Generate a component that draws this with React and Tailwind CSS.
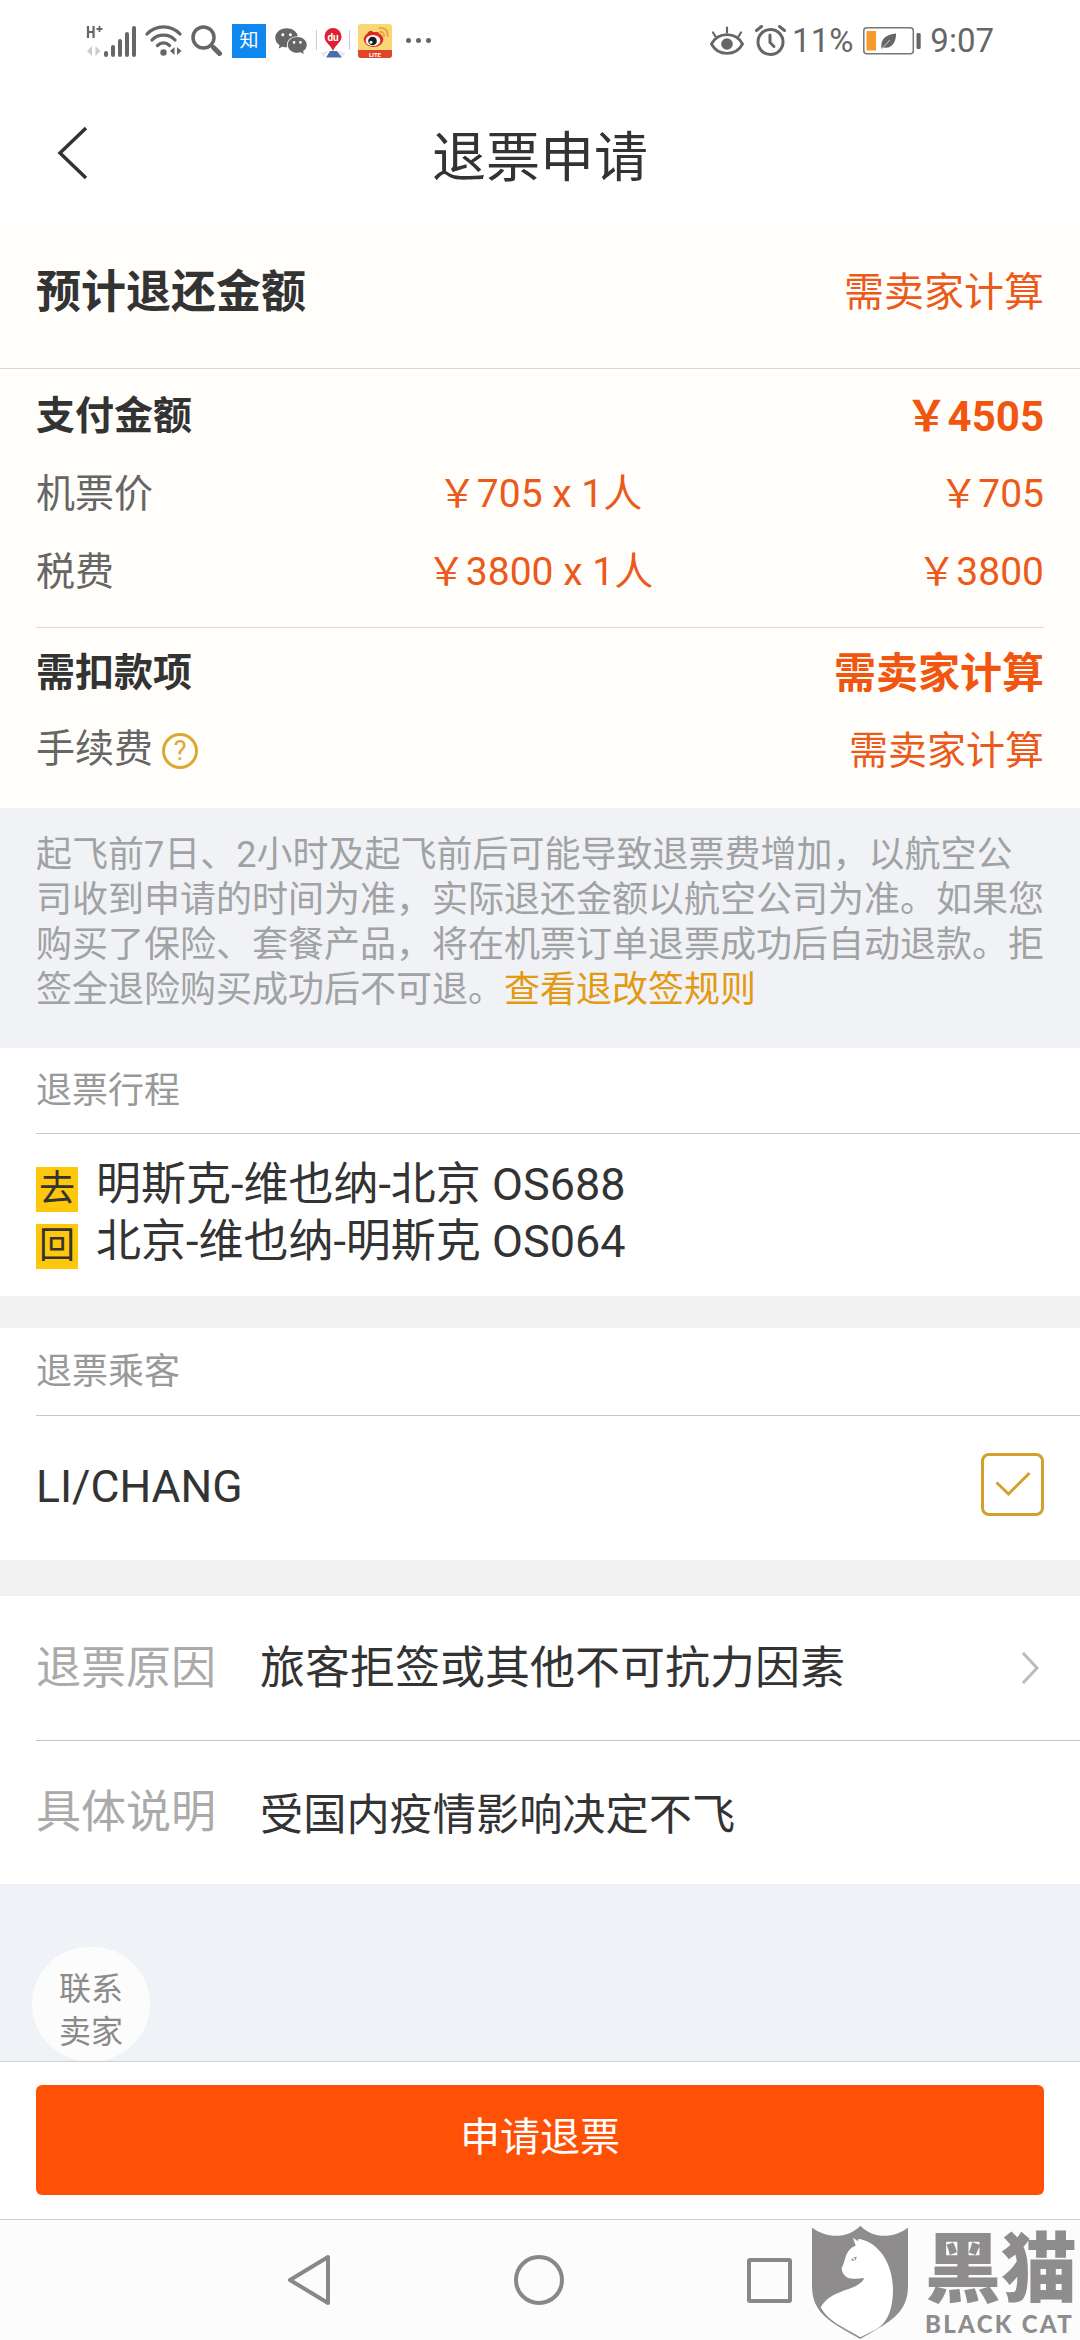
import { useState } from "react";
import { AiFillWechat } from "react-icons/ai";

const RULES_LINES = [
  "起飞前7日、2小时及起飞前后可能导致退票费增加，以航空公",
  "司收到申请的时间为准，实际退还金额以航空公司为准。如果您",
  "购买了保险、套餐产品，将在机票订单退票成功后自动退款。拒",
];

const fees = [
  { label: "机票价", detail: "￥705 x 1人", total: "￥705" },
  { label: "税费", detail: "￥3800 x 1人", total: "￥3800" },
];

const segments = [
  { tag: "去", route: "明斯克-维也纳-北京 OS688" },
  { tag: "回", route: "北京-维也纳-明斯克 OS064" },
];

function SignalIcon() {
  return (
    <svg width="50" height="32" viewBox="0 0 50 32" fill="none" stroke="#666">
      <path d="M2 1v12M7.500 1v12M2 7h5.500" strokeWidth="2.200" />
      <path d="M10.500 4h6M13.500 1v6" strokeWidth="1.800" />
      <path d="M6 21v10l-5-5zM9.500 21v10l5-5z" fill="#ccc" stroke="none" />
      <path d="M20 28v2M27 22v8M34 16v14M41 9v21M48 3v27" strokeWidth="4" strokeLinecap="round" />
    </svg>
  );
}

function WifiIcon() {
  return (
    <svg width="37" height="31" viewBox="0 0 37 31" fill="none" stroke="#666" strokeWidth="3.200" strokeLinecap="round">
      <path d="M2 9C11-.5 26-.5 35 9M7 15c6-6.500 17-6.500 23 0M12.500 20.500c3.500-3.500 8.500-3.500 12 0" />
      <circle cx="18.500" cy="27.500" r="3.200" fill="#666" stroke="none" />
      <path d="M29.500 22v8l-4.500-4zM32 22v8l4.500-4z" fill="#666" stroke="none" />
    </svg>
  );
}

function SearchIcon() {
  return (
    <svg width="31" height="31" viewBox="0 0 31 31" fill="none" stroke="#666" strokeLinecap="round">
      <circle cx="12.500" cy="12.500" r="10.500" strokeWidth="3.500" />
      <path d="M20.500 20.500l2 2" strokeWidth="3.500" />
      <path d="M23 23l5.500 5.500" strokeWidth="5" />
    </svg>
  );
}

function MapIcon() {
  return (
    <svg width="34" height="34" viewBox="0 0 34 34">
      <path d="M.5 6v20M33.500 6v20" stroke="#ccc" />
      <path d="M14 27h7l5 6.500H10z" fill="#4c6ea8" />
      <path d="M4 29l8-2-4 6.500zM30 29l-8-2 4 6.500z" fill="#e4e9f2" />
      <path d="M17 4a8.500 8.500 0 0 1 8.500 8.500c0 6-6 8-8.500 14.500-2.500-6.500-8.500-8.500-8.500-14.500A8.500 8.500 0 0 1 17 4z" fill="#dd2033" />
      <text x="17" y="16.500" textAnchor="middle" fontSize="10" fontWeight="700" fill="#fff" fontFamily="Roboto, sans-serif">du</text>
    </svg>
  );
}

function WeiboIcon() {
  return (
    <svg width="34" height="34" viewBox="0 0 34 34">
      <rect width="34" height="34" rx="3" fill="#f9d777" />
      <path d="M0 26h34v5a3 3 0 0 1-3 3H3a3 3 0 0 1-3-3z" fill="#e0452b" />
      <ellipse cx="15.500" cy="15.500" rx="9.800" ry="7.500" fill="#dc2a20" />
      <path d="M9 10c2-4 6-4 6-1 4-2 7-1 6 3z" fill="#dc2a20" />
      <ellipse cx="15" cy="16.500" rx="7.300" ry="5.500" fill="#fff" />
      <circle cx="14.500" cy="17" r="4.300" fill="#1b1b1b" />
      <circle cx="13" cy="18.300" r="1.500" fill="#fff" />
      <path d="M21.500 4c5-1 9 3 8 8M22 8c2.500-.5 4.500 1.500 4 4" fill="none" stroke="#e8a53a" strokeWidth="1.800" strokeLinecap="round" />
      <text x="17" y="32.500" textAnchor="middle" fontSize="6" fontWeight="700" fill="#fff" fontFamily="Roboto, sans-serif">LITE</text>
    </svg>
  );
}

function EyeIcon() {
  return (
    <svg width="34" height="30" viewBox="0 0 34 30" fill="none" stroke="#666" strokeWidth="2.800" strokeLinecap="round">
      <path d="M1.500 18C8 5.500 26 5.500 32.500 18 26 30.500 8 30.500 1.500 18z" />
      <circle cx="17" cy="18" r="5.800" fill="#666" stroke="none" />
      <path d="M17 1.500v5M3 6.500l2.500 4M31 6.500l-2.500 4" strokeWidth="2.200" />
    </svg>
  );
}

function AlarmIcon() {
  return (
    <svg width="31" height="31" viewBox="0 0 31 31" fill="none" stroke="#666" strokeWidth="3" strokeLinecap="round">
      <circle cx="15.500" cy="17" r="12.500" />
      <path d="M15 10v7.500l4 4" />
      <path d="M1.500 5.500l5-4M29.500 5.500l-5-4" />
    </svg>
  );
}

function BatteryIcon() {
  return (
    <svg width="59" height="28" viewBox="0 0 59 28">
      <rect x=".8" y=".8" width="49.500" height="26" rx="3" fill="none" stroke="#777" strokeWidth="1.500" />
      <rect x="3.500" y="4" width="9.500" height="19.500" fill="#f8992b" />
      <path d="M18.500 22C17 11 24 7.500 33 6.500 33.500 14 29 22.500 20.500 20.500z" fill="#666" />
      <path d="M19 21.500L27 13" stroke="#fff" strokeWidth=".7" />
      <rect x="53.500" y="6" width="4.200" height="16" rx="1.500" fill="#666" />
    </svg>
  );
}

function StatusBar() {
  return (
    <div className="flex h-[81px] items-center pl-[86px] pr-[86px]">
      <SignalIcon />
      <div className="ml-[9px]"><WifiIcon /></div>
      <div className="ml-[9px]"><SearchIcon /></div>
      <div className="ml-[10px] flex h-[34px] w-[34px] items-center justify-center bg-[#0e87ee] text-[19px] leading-none text-white">知</div>
      <AiFillWechat className="ml-[7px] h-9 w-9 text-[#666]" />
      <div className="ml-[7px]"><MapIcon /></div>
      <div className="ml-[8px]"><WeiboIcon /></div>
      <div className="ml-[14px] flex gap-[5px]">
        <span className="h-[5px] w-[5px] rounded-full bg-[#666]" />
        <span className="h-[5px] w-[5px] rounded-full bg-[#666]" />
        <span className="h-[5px] w-[5px] rounded-full bg-[#666]" />
      </div>
      <div className="ml-auto flex items-center text-[33px] leading-none text-[#666]">
        <EyeIcon />
        <div className="ml-[11px]"><AlarmIcon /></div>
        <span className="ml-[6px]">11%</span>
        <div className="ml-[10px]"><BatteryIcon /></div>
        <span className="ml-[8px]">9:07</span>
      </div>
    </div>
  );
}

function Watermark() {
  return (
    <div className="absolute bottom-0 right-0 flex h-[116px] w-[269px] text-[#8f8c8d]">
      <svg className="mt-px shrink-0" width="98" height="115" viewBox="0 0 292 345">
        <path d="M2 8c45 32 105 35 145-6 40 41 100 38 143 6v175c0 85-60 110-143 159C62 293 2 268 2 183z" fill="currentColor" />
        <path d="M125 38l15 11 2-8c65 12 103 80 103 152 0 60-16 100-50 120l-48 24C90 303 52 290 28 247c35-60 110-45 131-88-20 3-38 3-48 0-12-6-20-18-20-31 12-15 8-55 42-66z" fill="#fff" />
        <path d="M119 106c4-8 10-10 17-11-1 9-7 15-17 11z" fill="currentColor" />
        <circle cx="128" cy="102" r="3" fill="#fff" />
      </svg>
      <div className="ml-4 flex flex-col">
        <div className="h-[86px] whitespace-nowrap text-[76px] font-black leading-[92px]">黑猫</div>
        <div className="whitespace-nowrap font-['Lato',sans-serif] text-[24px] font-black leading-[28px] tracking-[2.3px]">BLACK CAT</div>
      </div>
    </div>
  );
}

function App() {
  const [checked, setChecked] = useState(true);

  return (
    <div className="relative flex h-[2340px] w-[1080px] flex-col overflow-hidden bg-white font-['Roboto','Noto_Sans_CJK_SC',sans-serif] text-[#333]">
      <StatusBar />

      <header className="grid h-[143px] grid-cols-[120px_1fr_120px] items-center">
        <svg className="ml-[55px]" width="34" height="54" viewBox="0 0 34 54" fill="none" stroke="#333" strokeWidth="3.500">
          <path d="M31 2L5 27l26 25" />
        </svg>
        <h1 className="pt-[12px] text-center text-[54px] leading-[60px]">退票申请</h1>
      </header>

      {/* Refund summary */}
      <section className="h-[584px] bg-[#fffefa]">
        <div className="flex h-[145px] items-center justify-between border-b border-[#d6d8d9] px-9 pb-[6px]">
          <h2 className="text-[45px] font-bold leading-[50px]">预计退还金额</h2>
          <span className="text-[40px] leading-[50px] text-[#eb5a1a]">需卖家计算</span>
        </div>
        <div className="mx-9 h-[259px] border-b border-[#d9dada] pt-[8px]">
          <div className="flex h-[78px] items-center justify-between">
            <h3 className="text-[39px] font-bold leading-none">支付金额</h3>
            <span className="pt-[2px] text-[42px] font-bold leading-none text-[#f0560f]">￥4505</span>
          </div>
          {fees.map((fee) => (
            <div key={fee.label} className="grid h-[78px] grid-cols-3 items-center text-[39px] leading-none text-[#eb5a1a]">
              <span className="text-[#666]">{fee.label}</span>
              <span className="whitespace-nowrap text-center">{fee.detail}</span>
              <span className="text-right">{fee.total}</span>
            </div>
          ))}
        </div>
        <div className="px-9 pt-[6px]">
          <div className="flex h-[78px] items-center justify-between">
            <h3 className="text-[39px] font-bold leading-none">需扣款项</h3>
            <span className="pt-[2px] text-[42px] font-bold leading-none text-[#f0560f]">需卖家计算</span>
          </div>
          <div className="flex h-[78px] items-center justify-between text-[39px] leading-none">
            <div className="flex items-center gap-[9px] text-[#666]">
              <span className="pb-[4px]">手续费</span>
              <span className="flex h-[36px] w-[36px] items-center justify-center rounded-full border-[3px] border-[#d9a931] text-[27px] leading-none text-[#d9a931]">?</span>
            </div>
            <span className="text-[#eb5a1a]">需卖家计算</span>
          </div>
        </div>
      </section>

      <div className="h-[240px] bg-[#f0f2f6] px-9 pt-[25px] text-[36px] leading-[45px] text-[#a0a2a3]">
        {RULES_LINES.map((line) => (
          <p key={line} className="whitespace-nowrap">{line}</p>
        ))}
        <p className="flex">
          <span>签全退险购买成功后不可退。</span>
          <a className="text-[#e39a12]">查看退改签规则</a>
        </p>
      </div>

      {/* Itinerary */}
      <section className="h-[248px]">
        <h2 className="ml-9 flex h-[86px] items-center border-b border-[#c8c8c8] text-[36px] leading-none text-[#999]">退票行程</h2>
        <div className="pl-9 pt-[22px]">
          {segments.map((segment) => (
            <div key={segment.tag} className="flex h-[57px] items-center">
              <span className="mt-[10px] flex h-[45px] w-[42px] items-center justify-center bg-[#fdc70b] pb-[2px] text-[36px] leading-none">{segment.tag}</span>
              <span className="ml-[18px] text-[45px] leading-none">{segment.route}</span>
            </div>
          ))}
        </div>
      </section>
      <div className="h-8 bg-[#f1f1f2]" />

      {/* Passengers */}
      <section className="h-[232px]">
        <h2 className="ml-9 flex h-[88px] items-center border-b border-[#c8c8c8] text-[36px] leading-none text-[#999]">退票乘客</h2>
        <div className="flex h-[136px] items-center justify-between px-9">
          <span className="pt-[7px] text-[44.500px] leading-none">LI/CHANG</span>
          <button
            onClick={() => setChecked(!checked)}
            className="flex h-[63px] w-[63px] items-center justify-center rounded-[8px] border-[3px] border-[#d3a12b]"
          >
            {checked && (
              <svg width="36" height="26" viewBox="0 0 36 26" fill="none" stroke="#d3a12b" strokeWidth="3">
                <path d="M1.500 11.500l12 11.500L34.500 2" />
              </svg>
            )}
          </button>
        </div>
      </section>
      <div className="h-9 bg-[#f2f2f2]" />

      {/* Reason */}
      <section className="h-[288px] pl-9">
        <div className="flex h-[145px] items-center border-b border-[#c4c4c4] pr-10 text-[45px] leading-none">
          <span className="w-[224px] text-[#aaa]">退票原因</span>
          <span>旅客拒签或其他不可抗力因素</span>
          <svg className="ml-auto" width="20" height="34" viewBox="0 0 20 34" fill="none" stroke="#bbb" strokeWidth="3">
            <path d="M3 2l14 15L3 32" />
          </svg>
        </div>
        <div className="flex h-[142px] items-center leading-none">
          <span className="w-[224px] text-[45px] text-[#aaa]">具体说明</span>
          <span className="pt-[8px] text-[43.200px]">受国内疫情影响决定不飞</span>
        </div>
      </section>

      <div className="flex h-[177px] items-end bg-[#eff2f7] pl-8">
        <button className="h-[114px] w-[118px] rounded-full bg-[#fcfcfd] pt-[13px] text-[32px] leading-[43px] text-[#8a8a8a]">
          联系
          <br />
          卖家
        </button>
      </div>

      <footer className="h-[159px] border-y border-[#cfd0d2] px-9 pt-[23px]">
        <button className="h-[110px] w-full rounded-[6px] bg-[#ff5106] pb-[5px] text-[40px] leading-none text-white">申请退票</button>
      </footer>

      {/* System navigation */}
      <nav className="flex flex-1 items-center justify-between bg-[#fcfcfc] pl-[287px] pr-[288px]">
        <svg width="44" height="52" viewBox="0 0 44 52" fill="none" stroke="#888" strokeWidth="4" strokeLinejoin="round">
          <path d="M41 3v46L3 26z" />
        </svg>
        <span className="h-[50px] w-[50px] rounded-full border-4 border-[#888]" />
        <span className="h-[45px] w-[45px] rounded-[3px] border-4 border-[#888]" />
      </nav>

      <Watermark />
    </div>
  );
}

export default App;
